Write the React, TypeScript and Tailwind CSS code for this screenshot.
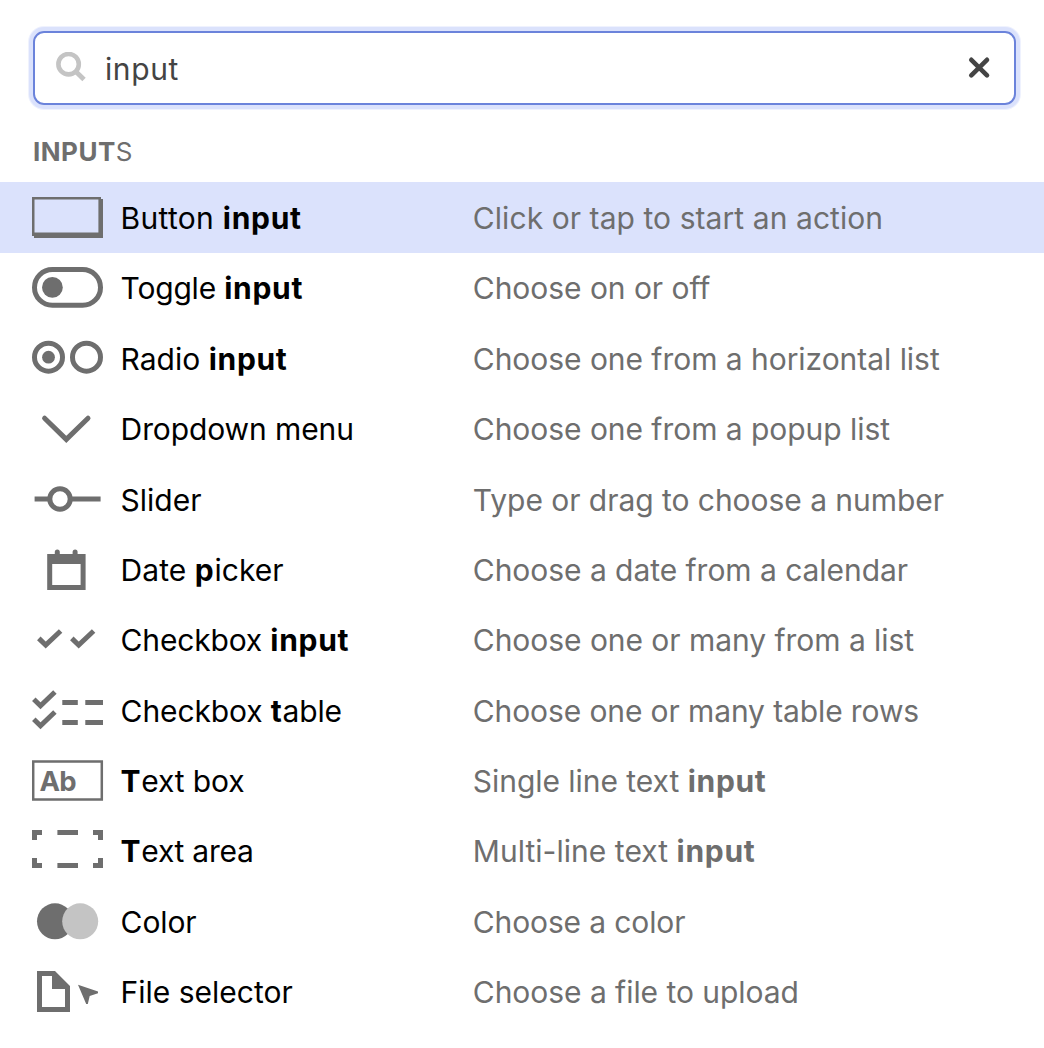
import type { ReactNode } from "react";

type Row = {
  name: ReactNode;
  nameTracking: string;
  desc: ReactNode;
  descTracking?: string;
  viewBox: string;
  icon: ReactNode;
  selected?: boolean;
};

const B = ({ children }: { children: ReactNode }) => (
  <b className="font-bold tracking-[0.7px]">{children}</b>
);

const GRAY = "#6e6e6e";

const check = "M38.8 638.4L45.7 645.1L60.6 631";
const smallCheck = "M33.8 699.2L40.5 705.7L54.9 692";

const rows: Row[] = [
  {
    name: <>Button <B>input</B></>,
    nameTracking: "tracking-[0.3px]",
    desc: "Click or tap to start an action",
    descTracking: "tracking-[0.07px]",
    viewBox: "32 183 72 70",
    selected: true,
    icon: (
      <path
        fill={GRAY}
        fillRule="evenodd"
        d="M32 197H101V199H103V238H34V236H32ZM34.5 199.5V232.5H98.4V199.5Z"
      />
    ),
  },
  {
    name: <>Toggle <B>input</B></>,
    nameTracking: "tracking-[-0.2px]",
    desc: "Choose on or off",
    viewBox: "32 253 72 70",
    icon: (
      <>
        <rect x="34.5" y="269.5" width="66" height="35.8" rx="17.9" fill="none" stroke={GRAY} strokeWidth="5" />
        <circle cx="52.4" cy="287.4" r="10.4" fill={GRAY} />
      </>
    ),
  },
  {
    name: <>Radio <B>input</B></>,
    nameTracking: "tracking-[0px]",
    desc: "Choose one from a horizontal list",
    viewBox: "32 323 72 70",
    icon: (
      <>
        <circle cx="48.5" cy="357.2" r="14" fill="none" stroke={GRAY} strokeWidth="5" />
        <circle cx="48.5" cy="357.2" r="6.4" fill={GRAY} />
        <circle cx="86.5" cy="357.2" r="14" fill="none" stroke={GRAY} strokeWidth="5" />
      </>
    ),
  },
  {
    name: "Dropdown menu",
    nameTracking: "tracking-[-0.1px]",
    desc: "Choose one from a popup list",
    viewBox: "32 394 72 70",
    icon: <path d="M44.6 418.2L66.3 439.4L88 418.2" fill="none" stroke={GRAY} strokeWidth="5" strokeLinecap="round" />,
  },
  {
    name: "Slider",
    nameTracking: "tracking-[0px]",
    desc: "Type or drag to choose a number",
    viewBox: "32 464 72 70",
    icon: (
      <>
        <path d="M34.6 499H49M71 499H100.6" stroke={GRAY} strokeWidth="5" />
        <circle cx="60" cy="499" r="10.2" fill="none" stroke={GRAY} strokeWidth="5" />
      </>
    ),
  },
  {
    name: <>Date <B>p</B>icker</>,
    nameTracking: "tracking-[0.05px]",
    desc: "Choose a date from a calendar",
    viewBox: "32 534 72 70",
    icon: (
      <>
        <path fill={GRAY} fillRule="evenodd" d="M47.2 554H85.6V590H47.2ZM52.2 564V585H80.6V564Z" />
        <path d="M57.3 552V558M75.1 552V558" stroke={GRAY} strokeWidth="5" strokeLinecap="round" />
      </>
    ),
  },
  {
    name: <>Checkbox <B>input</B></>,
    nameTracking: "tracking-[-0.17px]",
    desc: "Choose one or many from a list",
    viewBox: "32 605 72 70",
    icon: (
      <>
        <path d={check} fill="none" stroke={GRAY} strokeWidth="5" />
        <path d={check} transform="translate(33 0)" fill="none" stroke={GRAY} strokeWidth="5" />
      </>
    ),
  },
  {
    name: <>Checkbox <B>t</B>able</>,
    nameTracking: "tracking-[-0.12px]",
    desc: "Choose one or many table rows",
    descTracking: "tracking-[-0.11px]",
    viewBox: "32 675 72 70",
    icon: (
      <>
        <path d={smallCheck} fill="none" stroke={GRAY} strokeWidth="5" />
        <path d={smallCheck} transform="translate(0 20)" fill="none" stroke={GRAY} strokeWidth="5" />
        <path d="M62.3 702.5H77.8M85.3 702.5H103M62.3 722.5H77.8M85.3 722.5H103" stroke={GRAY} strokeWidth="5" />
      </>
    ),
  },
  {
    name: <><B>T</B>ext box</>,
    nameTracking: "tracking-[-0.13px]",
    desc: <>Single line text <B>input</B></>,
    viewBox: "32 745 72 70",
    icon: (
      <>
        <rect x="33.2" y="761.5" width="68.6" height="38" fill="none" stroke={GRAY} strokeWidth="2.5" />
        <text x="39.5" y="790.7" fill={GRAY} className="text-[27.5px] font-bold tracking-[-0.8px]">Ab</text>
      </>
    ),
  },
  {
    name: <><B>T</B>ext area</>,
    nameTracking: "tracking-[-0.25px]",
    desc: <>Multi-line text <B>input</B></>,
    descTracking: "tracking-[0.04px]",
    viewBox: "32 816 72 70",
    icon: (
      <path
        d="M34.5 840V832.6H42M93 832.6H100.5V840M100.5 858V865.6H93M42 865.6H34.5V858M57.4 832.6H78M57.4 865.6H78"
        fill="none"
        stroke={GRAY}
        strokeWidth="5"
      />
    ),
  },
  {
    name: "Color",
    nameTracking: "tracking-[-0.1px]",
    desc: "Choose a color",
    descTracking: "tracking-[-0.13px]",
    viewBox: "32 886 72 70",
    icon: (
      <>
        <circle cx="55" cy="921.3" r="18" fill={GRAY} />
        <circle cx="80.2" cy="921.3" r="18" fill="#c4c4c4" />
      </>
    ),
  },
  {
    name: "File selector",
    nameTracking: "tracking-[0px]",
    desc: "Choose a file to upload",
    viewBox: "32 957 72 70",
    icon: (
      <>
        <path
          fill={GRAY}
          fillRule="evenodd"
          d="M37 971H55L70 986V1012H37ZM42 976V1007H65V989H52V976Z"
        />
        <path fill={GRAY} d="M78 984.8L98 991.5V993.2L89.7 996L87.8 1004H86.2Z" />
      </>
    ),
  },
];

export default function App() {
  return (
    <div className="h-[1048px] w-[1044px] overflow-hidden bg-white pt-[31px] font-['Inter',sans-serif]">
      <div className="ml-[33px] flex h-[74px] w-[983px] items-center rounded-[11px] border-2 border-[#6b83db] pr-[23px] pl-[20px] shadow-[0_0_0_4px_#dbe2fc,0_0_0_5px_#eff2fe]">
        <svg className="h-8 w-8 shrink-0" viewBox="55 52 32 32" fill="none" stroke="#c4c4c4">
          <circle cx="68.6" cy="64.2" r="10.2" strokeWidth="4.6" />
          <path d="M75.5 71.2L84 79.4" strokeWidth="4.8" />
        </svg>
        <span className="relative top-[1px] ml-[18px] grow text-[30px] leading-[40px] tracking-[0.6px] text-[#444]">input</span>
        <svg className="h-6 w-6 shrink-0" viewBox="967 56 24 24" stroke="#444" strokeWidth="4.6">
          <path d="M971.3 59.8L987 75.4M987 59.8L971.3 75.4" strokeLinecap="round" />
        </svg>
      </div>
      <div className="mt-[32px] ml-[33px] h-[45.42px] text-[26px] leading-[30px] tracking-[0.5px] text-[#6e6e6e]">
        <b className="font-bold">INPUT</b>S
      </div>
      {rows.map((row) => (
        <div
          key={row.viewBox}
          className={
            row.selected
              ? "flex h-[70.36px] items-center bg-[#dbe2fc] pl-[32px]"
              : "flex h-[70.36px] items-center pl-[32px]"
          }
        >
          <svg className="h-[70px] w-[72px] shrink-0" viewBox={row.viewBox}>
            {row.icon}
          </svg>
          <div
            className={`ml-[16.6px] w-[352.2px] shrink-0 pt-[1px] text-[30px] leading-[40px] whitespace-nowrap text-black ${row.nameTracking}`}
          >
            {row.name}
          </div>
          <div
            className={`pt-[1px] text-[30px] leading-[40px] whitespace-nowrap text-[#6e6e6e] ${row.descTracking ?? "tracking-[-0.04px]"}`}
          >
            {row.desc}
          </div>
        </div>
      ))}
    </div>
  );
}
